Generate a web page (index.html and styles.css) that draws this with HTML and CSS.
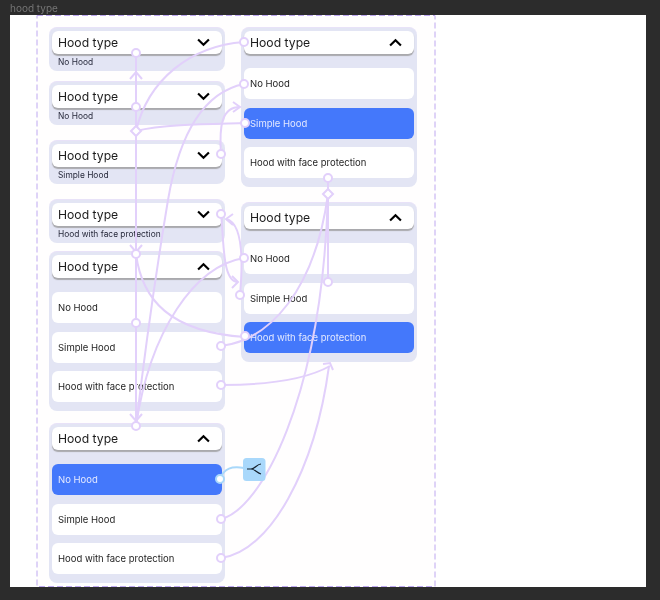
FILE: index.html
```html
<!DOCTYPE html>
<html lang="en">
<head>
<meta charset="utf-8">
<title>hood type</title>
<link rel="stylesheet" href="styles.css">
</head>
<body>
<div class="page">
  <div class="label">hood type</div>
  <div class="canvas">
    <div class="frame">
      <div class="col">
        <section class="card closed">
          <div class="head"><span>Hood type</span><svg class="chev" viewBox="0 0 12 8"><path d="M1 1.2 6 6 11 1.2"/></svg></div>
          <div class="value">No Hood</div>
        </section>
        <section class="card closed gap-10">
          <div class="head"><span>Hood type</span><svg class="chev" viewBox="0 0 12 8"><path d="M1 1.2 6 6 11 1.2"/></svg></div>
          <div class="value">No Hood</div>
        </section>
        <section class="card closed gap-15">
          <div class="head"><span>Hood type</span><svg class="chev" viewBox="0 0 12 8"><path d="M1 1.2 6 6 11 1.2"/></svg></div>
          <div class="value">Simple Hood</div>
        </section>
        <section class="card closed gap-15">
          <div class="head"><span>Hood type</span><svg class="chev" viewBox="0 0 12 8"><path d="M1 1.2 6 6 11 1.2"/></svg></div>
          <div class="value">Hood with face protection</div>
        </section>
        <section class="card open gap-8">
          <div class="head"><span>Hood type</span><svg class="chev" viewBox="0 0 12 8"><path d="M1 6.8 6 2 11 6.8"/></svg></div>
          <div class="opts">
            <div class="opt">No Hood</div>
            <div class="opt">Simple Hood</div>
            <div class="opt">Hood with face protection</div>
          </div>
        </section>
        <section class="card open gap-12">
          <div class="head"><span>Hood type</span><svg class="chev" viewBox="0 0 12 8"><path d="M1 6.8 6 2 11 6.8"/></svg></div>
          <div class="opts">
            <div class="opt on">No Hood</div>
            <div class="opt">Simple Hood</div>
            <div class="opt">Hood with face protection</div>
          </div>
        </section>
      </div>
      <div class="col">
        <section class="card open">
          <div class="head"><span>Hood type</span><svg class="chev" viewBox="0 0 12 8"><path d="M1 6.8 6 2 11 6.8"/></svg></div>
          <div class="opts">
            <div class="opt">No Hood</div>
            <div class="opt on">Simple Hood</div>
            <div class="opt">Hood with face protection</div>
          </div>
        </section>
        <section class="card open gap-15">
          <div class="head"><span>Hood type</span><svg class="chev" viewBox="0 0 12 8"><path d="M1 6.8 6 2 11 6.8"/></svg></div>
          <div class="opts">
            <div class="opt">No Hood</div>
            <div class="opt">Simple Hood</div>
            <div class="opt on">Hood with face protection</div>
          </div>
        </section>
      </div>
    </div>
  </div>
  <svg class="wires" viewBox="0 0 660 600" aria-hidden="true">
    <rect class="dash" x="37" y="15.500" width="398" height="571"/>
    <g class="wire">
      <path d="M136 53V426"/>
      <path d="M130 79 136 72 142 79"/>
      <path d="M130 245 136 252 142 245"/>
      <path d="M130 414 136 421 142 414"/>
      <path d="M244 42C190 46 148 80 136 131"/>
      <path d="M244 84C205 92 180 130 168 200C158 260 145 350 136 426"/>
      <path d="M136 131C165 124 215 124 245 123"/>
      <path d="M221 154C219 125 222 107 240 107"/>
      <path d="M233 102 240 107 233 112"/>
      <path d="M240 295C244 250 240 222 226 219"/>
      <path d="M233 214 226 219 233 225"/>
      <path d="M221 214C224 240 222 282 238 282"/>
      <path d="M232 276 238 282 232 288"/>
      <path d="M244 258C195 266 150 330 136 426"/>
      <path d="M136 254C142 300 170 332 245 337"/>
      <path d="M221 346C270 340 315 290 328 194"/>
      <path d="M328 282V178"/>
      <path d="M221 385C265 385 305 380 330 366"/>
      <path d="M323 364 330 363 333 370"/>
      <path d="M221 519C260 510 322 400 328 194"/>
      <path d="M221 558C270 552 315 470 329 366"/>
      <path class="link" d="M220 479C224 468 232 466 244 468"/>
      <path class="node" d="M136 126 141 131 136 136 131 131Z"/>
      <path class="node" d="M328 189 333 194 328 199 323 194Z"/>
      <circle class="node" cx="136" cy="53" r="4"/>
      <circle class="node" cx="136" cy="107" r="4"/>
      <circle class="node" cx="221" cy="154" r="4"/>
      <circle class="node" cx="221" cy="214" r="4"/>
      <circle class="node" cx="136" cy="254" r="4"/>
      <circle class="node" cx="136" cy="323" r="4"/>
      <circle class="node" cx="221" cy="346" r="4"/>
      <circle class="node" cx="221" cy="385" r="4"/>
      <circle class="node" cx="136" cy="426" r="4"/>
      <circle class="node" cx="221" cy="519" r="4"/>
      <circle class="node" cx="221" cy="558" r="4"/>
      <circle class="node" cx="244" cy="42" r="4"/>
      <circle class="node" cx="244" cy="84" r="4"/>
      <circle class="node" cx="245" cy="123" r="4"/>
      <circle class="node" cx="328" cy="178" r="4"/>
      <circle class="node" cx="244" cy="258" r="4"/>
      <circle class="node" cx="240" cy="295" r="4"/>
      <circle class="node" cx="245" cy="336" r="4"/>
      <circle class="node" cx="328" cy="282" r="4"/>
      <circle class="node link" cx="220" cy="479" r="4"/>
    </g>
    <rect class="badge" x="243" y="458" width="22.500" height="23" rx="3.500"/>
    <path class="branch" d="M261 464C257 464 255 469 251 469H247M251 469C255 469 257 473 261 474"/>
  </svg>
</div>
</body>
</html>
```
FILE: styles.css
```css
* { box-sizing: border-box; }
html, body { margin: 0; height: 100%; }
body { background: #2c2c2c; font-family: Inter, "Liberation Sans", sans-serif; overflow: hidden; }
.page { position: relative; width: 660px; height: 600px; padding-left: 10px; filter: blur(0.35px); }
.label { height: 15px; padding-top: 2px; font-size: 10px; line-height: 12px; color: #767676; }
.canvas { width: 636px; height: 572px; background: #fff; padding-left: 27px; }
.frame { width: 399px; height: 572px; padding: 12px 0 0 12px; display: flex; gap: 16px; background: #fffefe; }
.col { width: 176px; display: flex; flex-direction: column; }
.card { background: #e3e5f4; border-radius: 8px; padding: 3px 3px 0; border-top: 1px solid #e8e2f8; }
.closed { height: 44px; }
.open { height: 160px; }
.gap-8 { margin-top: 8px; }
.gap-10 { margin-top: 10px; }
.gap-12 { margin-top: 12px; }
.gap-15 { margin-top: 15px; }
.head { height: 23px; background: #fff; border-radius: 6px; box-shadow: 0 1.500px 1px #a9a9ad; display: flex; align-items: center; justify-content: space-between; padding: 0 12px 0 6px; font-size: 12.200px; color: #1c1c1c; }
.chev { width: 13px; height: 9px; fill: none; stroke: #000; stroke-width: 2; }
.value { padding: 1.500px 0 0 6px; font-size: 8.400px; line-height: 12px; color: #26283a; }
.opts { margin-top: 14px; display: flex; flex-direction: column; gap: 8.500px; }
.opt { height: 31px; background: #fff; border-radius: 6px; padding-left: 6px; font-size: 9.500px; line-height: 31px; color: #1e1e1e; }
.on { background: #4478fb; color: #e4e9ff; }
.wires { position: absolute; left: 0; top: 0; width: 660px; height: 600px; pointer-events: none; }
.dash { fill: none; stroke: #bea8f0; stroke-width: 1; stroke-dasharray: 6 3; }
.wire path, .wire circle { fill: none; stroke: #e2d0fb; stroke-width: 2; }
.wire .node { fill: #fff; }
.wire .link { stroke: #a9d8fa; }
.badge { fill: #a9d8fb; }
.branch { fill: none; stroke: #14202c; stroke-width: 1.200; }
```
